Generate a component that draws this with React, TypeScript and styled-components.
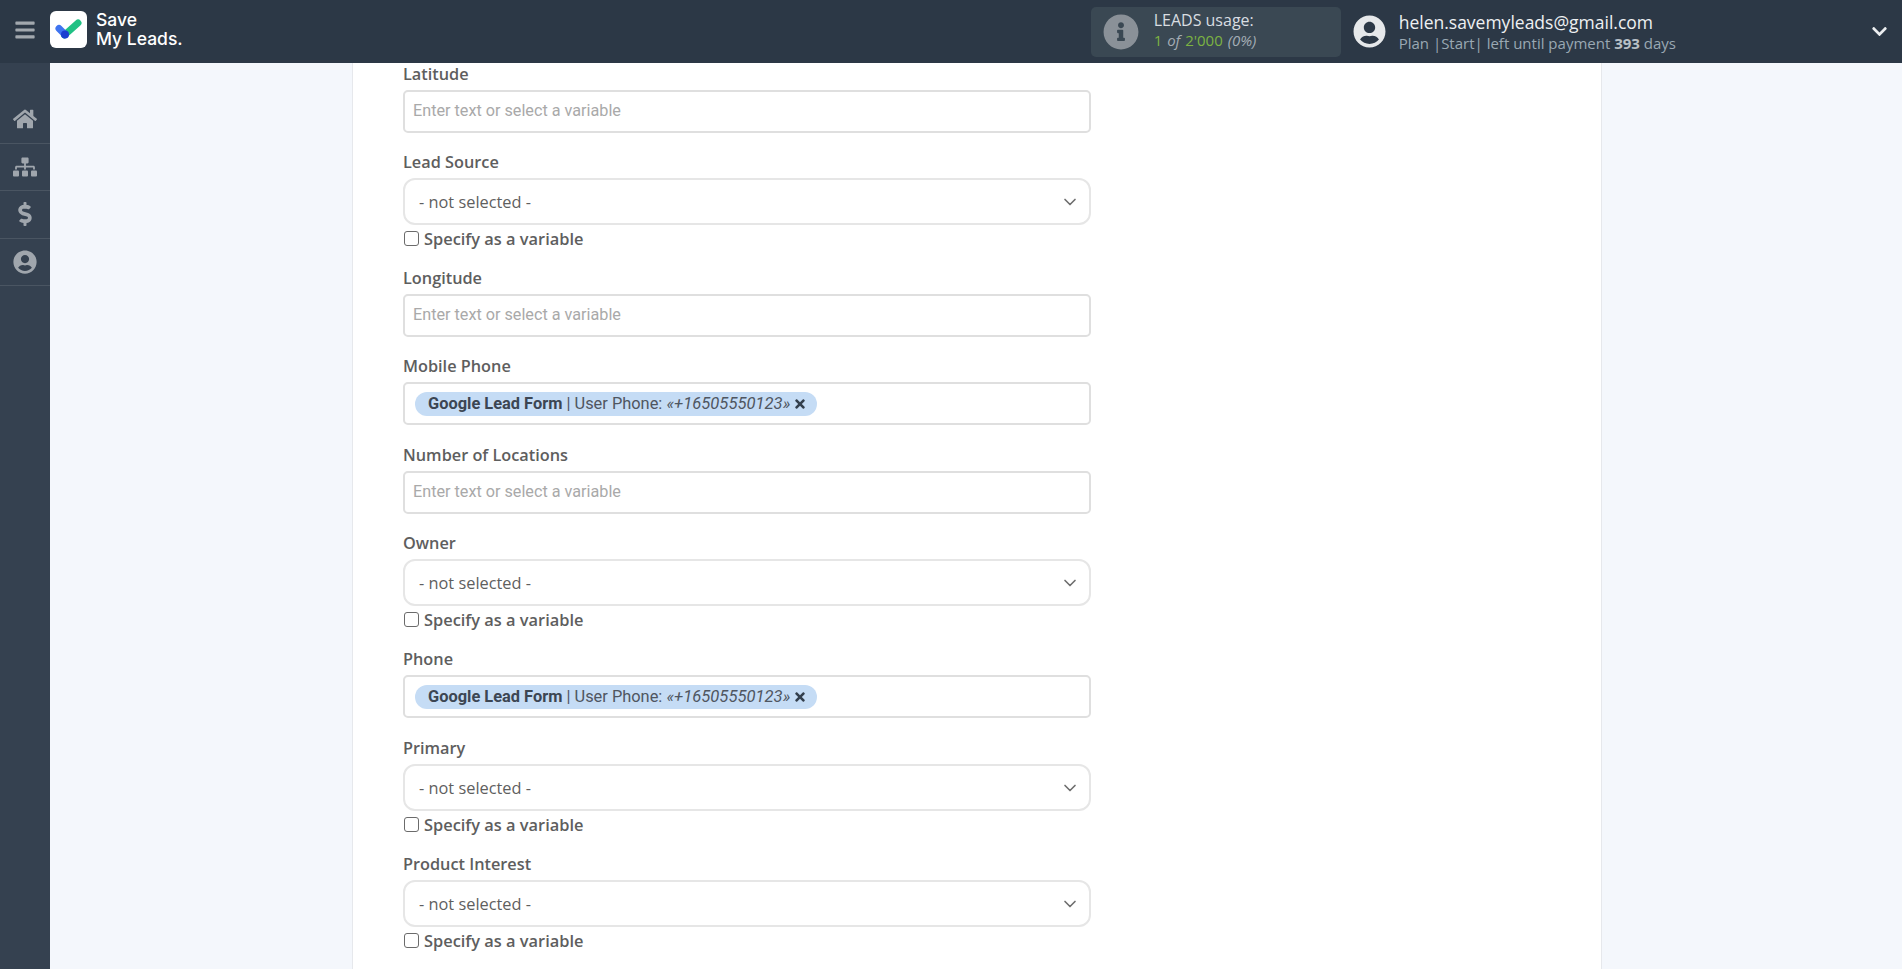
import React from 'react';
import styled, { createGlobalStyle } from 'styled-components';
import {
  FaBars,
  FaChevronDown,
  FaDollarSign,
  FaHome,
  FaInfoCircle,
  FaSitemap,
  FaTimes,
  FaUserCircle,
} from 'react-icons/fa';
import { LuChevronDown } from 'react-icons/lu';

const GlobalStyle = createGlobalStyle`
  html, body {
    margin: 0;
    padding: 0;
    height: 100%;
    overflow: hidden;
    font-family: 'Open Sans', sans-serif;
  }
  * {
    box-sizing: border-box;
  }
`;

const Page = styled.div`
  width: 1902px;
  height: 969px;
  display: flex;
  flex-direction: column;
  overflow: hidden;
`;

const Header = styled.header`
  height: 63px;
  flex: none;
  display: flex;
  align-items: center;
  background: #2c3846;
  color: #fff;
`;

const MenuButton = styled.div`
  width: 50px;
  margin-bottom: 4px;
  display: flex;
  justify-content: center;
  color: #a2a8ae;
  font-size: 22px;
`;

const LogoBox = styled.div`
  width: 37px;
  height: 37px;
  margin-bottom: 4px;
  border-radius: 6px;
  background: #fff;
  display: flex;
  align-items: center;
  justify-content: center;
`;

const LogoText = styled.div`
  margin-left: 9px;
  margin-bottom: 6px;
  font-family: 'Inter', sans-serif;
  font-weight: 500;
  font-size: 17.5px;
  line-height: 19px;
  color: #fff;
`;

const Usage = styled.div`
  margin-left: 908px;
  width: 250px;
  height: 50px;
  border-radius: 5px;
  background: #3a4853;
  display: flex;
  align-items: center;
  padding-left: 12px;
`;

const UsageIcon = styled.div`
  color: #8a9198;
  font-size: 36px;
  line-height: 0;
  margin-right: 15px;
`;

const UsageText = styled.div`
  margin-bottom: 4px;
  font-size: 16px;
  line-height: 20px;
  color: #d8dde1;
`;

const UsageCount = styled.div`
  font-size: 15px;
  font-style: italic;
  word-spacing: 1px;
  color: #a4adb5;
`;

const Green = styled.span`
  color: #7cb342;
  font-style: normal;
`;

const Account = styled.div`
  margin-left: 12px;
  display: flex;
  align-items: center;
  flex: 1;
`;

const AccountIcon = styled.div`
  color: #e6e8ea;
  font-size: 33px;
  line-height: 0;
  margin-right: 13px;
`;

const AccountText = styled.div`
  flex: 1;
  margin-top: 1px;
`;

const Email = styled.div`
  font-size: 17.5px;
  line-height: 22px;
  color: #eef0f2;
`;

const Plan = styled.div`
  font-size: 15px;
  line-height: 20px;
  color: #9aa8b3;

  b {
    font-weight: 700;
    color: #b9c0c6;
  }
`;

const AccountChevron = styled.div`
  color: #eceef0;
  font-size: 17px;
  line-height: 0;
  margin-right: 14px;
`;

const Body = styled.div`
  flex: 1;
  display: flex;
  min-height: 0;
`;

const Sidebar = styled.nav`
  width: 50px;
  flex: none;
  padding-top: 33px;
  background: #354150;
`;

const SideItem = styled.div`
  height: 47.5px;
  display: flex;
  align-items: center;
  justify-content: center;
  border-bottom: 1px solid #4a5562;
  color: #a0a6ad;
  font-size: 24px;
`;

const Main = styled.main`
  flex: 1;
  display: flex;
  justify-content: center;
  padding-left: 2px;
  background: #f4f7fc;
  overflow: hidden;
`;

const Card = styled.section`
  width: 1250px;
  padding: 1px 0 0 50px;
  background: #fff;
  border-left: 1px solid #e6e8ec;
  border-right: 1px solid #e6e8ec;
`;

const Form = styled.div`
  width: 688px;
`;

const Field = styled.div`
  padding-bottom: 20px;
`;

const Label = styled.div`
  height: 20px;
  margin-bottom: 6px;
  font-size: 16.3px;
  line-height: 20px;
  font-weight: 600;
  color: #5e5e5e;
`;

const TextBox = styled.div<{ $filled?: boolean }>`
  height: 43px;
  margin-bottom: ${(props) => (props.$filled ? '0' : '-1px')};
  border: 2px solid #dfdfdf;
  border-radius: 5px;
  background: #fff;
  display: flex;
  align-items: center;
  padding-left: 8px;
  font-family: 'Roboto', sans-serif;
  font-size: 16.2px;
`;

const Placeholder = styled.span`
  margin-bottom: 2px;
  color: #a9a9a9;
`;

const Chip = styled.span`
  height: 24px;
  padding: 0 10px 0 13px;
  margin-left: 2px;
  border-radius: 12px;
  background: #c5dcf5;
  display: inline-flex;
  align-items: center;
  white-space: pre;
  font-size: 16.4px;
  color: #4f5661;

  b {
    font-weight: 700;
    color: #3c4653;
  }

  i {
    font-size: 16.6px;
  }

  svg {
    margin-left: 3px;
    font-size: 14px;
    color: #333f4d;
  }
`;

const SelectBox = styled.div`
  height: 47px;
  border: 2px solid #e6e6e6;
  border-radius: 12px;
  background: #fff;
  display: flex;
  align-items: center;
  justify-content: space-between;
  padding: 0 9px 0 14px;
  font-size: 16.35px;
  color: #5f5f5f;

  svg {
    font-size: 20px;
    color: #6e6e6e;
  }
`;

const CheckRow = styled.label`
  height: 23px;
  padding-top: 4px;
  display: flex;
  align-items: center;
  gap: 5px;
  font-size: 16.4px;
  font-weight: 600;
  color: #5e5e5e;
`;

const CheckBox = styled.span`
  width: 15px;
  height: 15px;
  margin-left: 1px;
  border: 1.5px solid #6b6b6b;
  border-radius: 3px;
  background: #fff;
`;

type FormField = { label: string; kind: 'text' | 'select' | 'chip' };

const fields: FormField[] = [
  { label: 'Latitude', kind: 'text' },
  { label: 'Lead Source', kind: 'select' },
  { label: 'Longitude', kind: 'text' },
  { label: 'Mobile Phone', kind: 'chip' },
  { label: 'Number of Locations', kind: 'text' },
  { label: 'Owner', kind: 'select' },
  { label: 'Phone', kind: 'chip' },
  { label: 'Primary', kind: 'select' },
  { label: 'Product Interest', kind: 'select' },
];

const Logo = () => (
  <svg width="27" height="22" viewBox="0 0 27 22">
    <path d="M9.5 16 L23 4" stroke="#20c184" strokeWidth="7" strokeLinecap="round" fill="none" />
    <path d="M4 9.5 L10 15.5" stroke="#3f74f0" strokeWidth="7" strokeLinecap="round" fill="none" />
    <circle cx="10" cy="15.5" r="4" fill="#1b3fd0" />
  </svg>
);

const App: React.FC = () => {
  return (
    <Page>
      <GlobalStyle />
      <Header>
        <MenuButton>
          <FaBars />
        </MenuButton>
        <LogoBox>
          <Logo />
        </LogoBox>
        <LogoText>
          Save
          <br />
          My Leads.
        </LogoText>
        <Usage>
          <UsageIcon>
            <FaInfoCircle />
          </UsageIcon>
          <UsageText>
            LEADS usage:
            <UsageCount>
              <Green>1</Green> of <Green>2'000</Green> (0%)
            </UsageCount>
          </UsageText>
        </Usage>
        <Account>
          <AccountIcon>
            <FaUserCircle />
          </AccountIcon>
          <AccountText>
            <Email>helen.savemyleads@gmail.com</Email>
            <Plan>
              Plan |Start| left until payment <b>393</b> days
            </Plan>
          </AccountText>
          <AccountChevron>
            <FaChevronDown />
          </AccountChevron>
        </Account>
      </Header>
      <Body>
        <Sidebar>
          <SideItem>
            <FaHome />
          </SideItem>
          <SideItem>
            <FaSitemap />
          </SideItem>
          <SideItem>
            <FaDollarSign />
          </SideItem>
          <SideItem>
            <FaUserCircle />
          </SideItem>
        </Sidebar>
        <Main>
          <Card>
            <Form>
              {fields.map((field) => (
                <Field key={field.label}>
                  <Label>{field.label}</Label>
                  {field.kind === 'text' && (
                    <TextBox>
                      <Placeholder>Enter text or select a variable</Placeholder>
                    </TextBox>
                  )}
                  {field.kind === 'chip' && (
                    <TextBox $filled>
                      <Chip>
                        <b>Google Lead Form</b> | User Phone: <i>«+16505550123»</i>
                        <FaTimes />
                      </Chip>
                    </TextBox>
                  )}
                  {field.kind === 'select' && (
                    <>
                      <SelectBox>
                        - not selected -
                        <LuChevronDown />
                      </SelectBox>
                      <CheckRow>
                        <CheckBox />
                        Specify as a variable
                      </CheckRow>
                    </>
                  )}
                </Field>
              ))}
            </Form>
          </Card>
        </Main>
      </Body>
    </Page>
  );
};

export default App;
